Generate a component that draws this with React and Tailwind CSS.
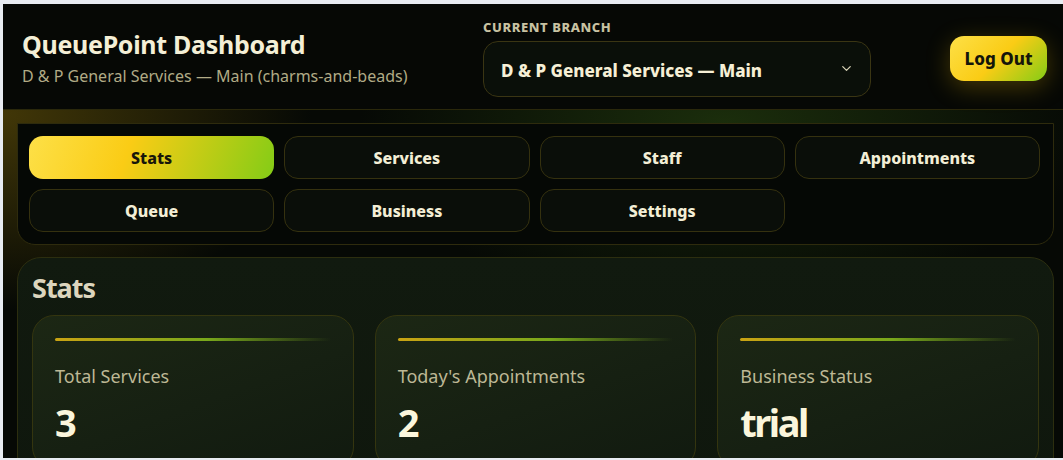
import { ChevronDown } from "lucide-react";

const tabs = ["Stats", "Services", "Staff", "Appointments", "Queue", "Business", "Settings"];

const stats = [
  { label: "Total Services", value: "3" },
  { label: "Today's Appointments", value: "2" },
  { label: "Business Status", value: "trial" },
];

const StatCard = ({ label, value }) => (
  <div className="rounded-[22px] border border-[#34350f] bg-[linear-gradient(160deg,#1c2714_0%,#162012_55%,#111a0f_100%)] px-[22px] pt-[22px] pb-6">
    <div className="h-[3px] w-full rounded-full bg-[linear-gradient(90deg,#c9a313_0%,#79a81b_55%,rgba(80,120,20,0)_100%)]" />
    <div className="mt-[23px] text-[18px] leading-6 text-[#bdb895]">{label}</div>
    <div className="mt-[12px] text-[38px] font-bold leading-[44px] tracking-[-2.5px] text-[#fbf6dc]">
      {value}
    </div>
  </div>
);

export default function App() {
  const activeTab = "Stats";

  return (
    <div
      className="h-[460px] w-full overflow-hidden bg-[#e8ecf2] pl-[3px] pt-[4px] pb-[2px]"
      style={{ fontFamily: '"Noto Sans", "Open Sans", sans-serif' }}
    >
      <div className="h-full overflow-hidden bg-[#060905] bg-[radial-gradient(ellipse_440px_280px_at_0%_110px,rgba(80,66,8,0.8),transparent_70%),radial-gradient(ellipse_520px_260px_at_68%_120px,rgba(34,58,14,0.75),transparent_70%)]">
        {/* Top bar */}
        <header className="flex h-[106px] items-center border-b border-[#2a280b] bg-[#060805] pl-[19px] pr-[16px]">
          <div>
            <h1 className="text-[25px] font-bold leading-8 tracking-[-0.3px] text-[#f4efd6]">
              QueuePoint Dashboard
            </h1>
            <p className="mt-[6px] text-[16px] leading-5 text-[#b1ab86]">
              D &amp; P General Services — Main (charms-and-beads)
            </p>
          </div>

          <div className="ml-auto mt-[2px] w-[388px]">
            <div className="text-[13px] font-extrabold uppercase leading-4 tracking-[0.6px] text-[#c8c2a2]">
              Current Branch
            </div>
            <div className="relative mt-[6px] flex h-[56px] items-center rounded-[15px] border border-[#3a3513] bg-[#0a0f09] pl-[17px] pr-4 pt-[5px]">
              <span className="text-[17px] font-extrabold text-[#f6f0d6]">
                D &amp; P General Services — Main
              </span>
              <ChevronDown size={15} strokeWidth={2} className="ml-auto -mt-[6px] text-[#d8d2b6]" />
            </div>
          </div>

          <button className="ml-[79px] mt-[4px] h-[45px] w-[97px] rounded-[14px] bg-[linear-gradient(135deg,#fde047_0%,#facc15_50%,#84cc16_100%)] text-[17px] font-extrabold text-[#15150a] shadow-[0_6px_24px_rgba(234,179,8,0.28)]">
            Log Out
          </button>
        </header>

        <main className="pl-[14px] pr-[9px] pt-[13px]">
          {/* Section tabs */}
          <nav className="grid grid-cols-4 gap-x-[10px] gap-y-[10px] rounded-b-[18px] border border-[#2e2b0d] bg-[#050805] pl-[11px] pr-[13px] pt-[12px] pb-[12px]">
            {tabs.map((tab) => (
              <button
                key={tab}
                className={
                  tab === activeTab
                    ? "h-[43px] rounded-[14px] bg-[linear-gradient(110deg,#fde047_0%,#facc15_40%,#84cc16_100%)] text-[16px] font-extrabold text-[#17160a]"
                    : "h-[43px] rounded-[14px] border border-[#35310f] bg-[#0a0e09] text-[16px] font-extrabold text-[#f3eed6]"
                }
              >
                {tab}
              </button>
            ))}
          </nav>

          {/* Stats panel */}
          <section className="mt-[12px] rounded-t-[24px] border border-[#2c2e0f] bg-[linear-gradient(180deg,#111a0f_0%,#0f170d_100%)] px-[14px] pt-[14px] pb-6">
            <h2 className="text-[27px] font-bold leading-8 tracking-[-1px] text-[#dcd5bd]">Stats</h2>
            <div className="mt-[11px] grid grid-cols-3 gap-[21px]">
              {stats.map((s) => (
                <StatCard key={s.label} label={s.label} value={s.value} />
              ))}
            </div>
          </section>
        </main>
      </div>
    </div>
  );
}
